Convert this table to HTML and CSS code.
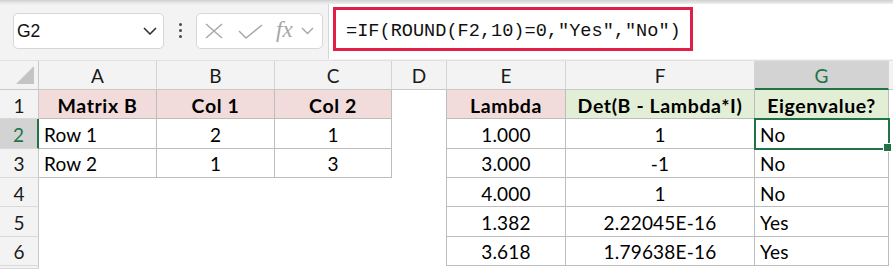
FILE: index.html
```html
<!DOCTYPE html>
<html>
<head>
<meta charset="utf-8">
<link rel="stylesheet" href="styles.css">
</head>
<body>
<div class="toolbar">
  <div class="namebox">
    <span class="nb-text">G2</span>
    <svg class="chev" width="14" height="8" viewBox="0 0 14 8"><path d="M1 1 L7 7 L13 1" fill="none" stroke="#333" stroke-width="1.6"/></svg>
  </div>
  <div class="dots"><span></span><span></span><span></span></div>
  <div class="fbtns">
    <svg class="ico-x" width="18" height="16" viewBox="0 0 18 16"><path d="M1 1 L17 15 M17 1 L1 15" stroke="#a6a6a6" stroke-width="1.4" fill="none"/></svg>
    <svg class="ico-ok" width="25" height="15" viewBox="0 0 25 15"><path d="M1 7 L8 14 L24 1" stroke="#a6a6a6" stroke-width="1.4" fill="none"/></svg>
    <span class="fx">fx</span>
    <svg class="chev2" width="13" height="8" viewBox="0 0 13 8"><path d="M1 1 L6.5 6.5 L12 1" fill="none" stroke="#a6a6a6" stroke-width="1.4"/></svg>
  </div>
  <div class="formula">
    <div class="fbox">=IF(ROUND(F2,10)=0,"Yes","No")</div>
  </div>
</div>

<div class="sheet">
  <div class="corner"><span class="tri"></span></div>
  <div class="colh">A</div>
  <div class="colh">B</div>
  <div class="colh">C</div>
  <div class="colh">D</div>
  <div class="colh">E</div>
  <div class="colh">F</div>
  <div class="colh sel">G</div>
  <div class="colh last"></div>

  <div class="rowh">1</div>
  <div class="cell b pink bold ctr">Matrix B</div>
  <div class="cell b pink bold ctr">Col 1</div>
  <div class="cell b pink bold ctr">Col 2</div>
  <div class="cell br"></div>
  <div class="cell b pink bold ctr">Lambda</div>
  <div class="cell b green bold ctr">Det(B - Lambda*I)</div>
  <div class="cell b green bold ctr">Eigenvalue?</div>
  <div class="cell"></div>

  <div class="rowh sel">2</div>
  <div class="cell b">Row 1</div>
  <div class="cell b ctr">2</div>
  <div class="cell b ctr">1</div>
  <div class="cell br"></div>
  <div class="cell b ctr">1.000</div>
  <div class="cell b ctr">1</div>
  <div class="cell b active">No</div>
  <div class="cell"></div>

  <div class="rowh">3</div>
  <div class="cell b">Row 2</div>
  <div class="cell b ctr">1</div>
  <div class="cell b ctr">3</div>
  <div class="cell br"></div>
  <div class="cell b ctr">3.000</div>
  <div class="cell b ctr">-1</div>
  <div class="cell b">No</div>
  <div class="cell"></div>

  <div class="rowh">4</div>
  <div class="cell"></div>
  <div class="cell"></div>
  <div class="cell"></div>
  <div class="cell br"></div>
  <div class="cell b ctr">4.000</div>
  <div class="cell b ctr">1</div>
  <div class="cell b">No</div>
  <div class="cell"></div>

  <div class="rowh">5</div>
  <div class="cell"></div>
  <div class="cell"></div>
  <div class="cell"></div>
  <div class="cell br"></div>
  <div class="cell b ctr">1.382</div>
  <div class="cell b ctr">2.22045E-16</div>
  <div class="cell b">Yes</div>
  <div class="cell"></div>

  <div class="rowh">6</div>
  <div class="cell"></div>
  <div class="cell"></div>
  <div class="cell"></div>
  <div class="cell br"></div>
  <div class="cell b ctr">3.618</div>
  <div class="cell b ctr">1.79638E-16</div>
  <div class="cell b">Yes</div>
  <div class="cell"></div>

  <div class="rowh"></div>
  <div class="cell"></div>
  <div class="cell"></div>
  <div class="cell"></div>
  <div class="cell"></div>
  <div class="cell"></div>
  <div class="cell"></div>
  <div class="cell"></div>
  <div class="cell"></div>
</div>
</body>
</html>
```

FILE: styles.css
```css
* { box-sizing: border-box; }
html, body { margin: 0; padding: 0; }
body {
  width: 893px;
  height: 269px;
  overflow: hidden;
  background: #fff;
  font-family: Lato, "Liberation Sans", sans-serif;
  color: #000;
}

.toolbar {
  display: flex;
  height: 61px;
  background: linear-gradient(#cfcfcf 0, #e9e9e9 3px, #f3f3f3 5px);
  border-bottom: 1px solid #e1e1e1;
}

.namebox {
  margin: 13px 0 0 13px;
  width: 151px;
  height: 36px;
  background: #fff;
  border: 1px solid #d6d6d6;
  border-radius: 5px;
  display: flex;
  align-items: center;
  justify-content: space-between;
  padding: 0 6px 0 3px;
}
.nb-text {
  font-family: "Liberation Sans", Arial, sans-serif;
  font-size: 17.5px;
  color: #111;
}

.dots {
  width: 32px;
  display: flex;
  flex-direction: column;
  align-items: center;
  justify-content: center;
  gap: 3px;
  padding-top: 1px;
}
.dots span {
  width: 3px;
  height: 3px;
  border-radius: 50%;
  background: #4a4a4a;
}

.fbtns {
  margin-top: 13px;
  width: 127px;
  height: 36px;
  background: #fff;
  border: 1px solid #d6d6d6;
  border-radius: 5px;
  display: flex;
  align-items: center;
  padding-left: 8px;
}
.ico-x { margin-right: 15px; }
.ico-ok { margin-right: 13px; }
.fx {
  font-family: "Liberation Serif", "DejaVu Serif", serif;
  font-style: italic;
  font-size: 23px;
  color: #a6a6a6;
  margin-right: 8px;
  line-height: 1;
  margin-top: -3px;
}

.formula {
  flex: 1;
  margin: 4px 0 0 5px;
  height: 55px;
  background: #fff;
  border-left: 1px solid #d6d6d6;
  padding: 3px 0 0 4px;
}
.fbox {
  width: 360px;
  height: 44px;
  border: 3px solid #e11d48;
  display: flex;
  align-items: center;
  padding: 5px 0 0 10px;
  font-family: "Liberation Mono", "DejaVu Sans Mono", monospace;
  font-size: 18.6px;
  color: #111;
  white-space: pre;
}

.sheet {
  display: grid;
  grid-template-columns: 39px 118px 118px 117px 55px 119px 189px 134px 1fr;
  grid-template-rows: 29px repeat(6, 29.33px) 1fr;
  height: 208px;
  font-size: 19px;
}

.corner {
  position: relative;
  background: #f3f3f3;
  border-right: 1px solid #c9c9c9;
  border-bottom: 1px solid #c9c9c9;
}
.tri {
  position: absolute;
  right: 4px;
  bottom: 5px;
  width: 0;
  height: 0;
  border-left: 18px solid transparent;
  border-bottom: 18px solid #c4c4c4;
}

.colh {
  background: #f3f3f3;
  border-right: 1px solid #d4d4d4;
  border-bottom: 1px solid #c9c9c9;
  display: flex;
  align-items: center;
  justify-content: center;
  padding-top: 1px;
  color: #1a1a1a;
}
.colh.sel {
  background: #d3d3d3;
  color: #217346;
  border-bottom: 2px solid #217346;
}
.colh.last { border-right: none; }

.rowh {
  background: #f3f3f3;
  border-right: 1px solid #c9c9c9;
  border-bottom: 1px solid #d9d9d9;
  display: flex;
  align-items: center;
  justify-content: center;
  padding-top: 2px;
  color: #1a1a1a;
}
.rowh.sel {
  background: #d3d3d3;
  color: #217346;
  border-right: 2px solid #217346;
}

.cell {
  display: flex;
  align-items: center;
  padding: 2px 0 0 5px;
  white-space: nowrap;
  background: #fff;
  letter-spacing: 0.2px;
}
.cell.b {
  border-right: 1px solid #bdbdbd;
  border-bottom: 1px solid #bdbdbd;
}
.cell.br { border-right: 1px solid #bdbdbd; }
.ctr { justify-content: center; padding-left: 0; }
.bold { font-weight: 700; font-size: 19.5px; letter-spacing: 0.6px; }
.pink { background: #f2dcdb; }
.green { background: #e2efd6; }

.active {
  position: relative;
  outline: 2px solid #217346;
  outline-offset: -1px;
}
.active::after {
  content: "";
  position: absolute;
  right: -4px;
  bottom: -4px;
  width: 7px;
  height: 7px;
  background: #217346;
  border: 1px solid #fff;
}
```
